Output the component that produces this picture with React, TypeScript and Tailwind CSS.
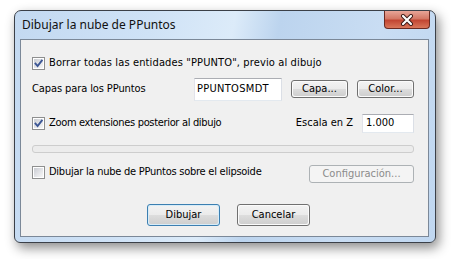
import React from "react";

const Check = ({ checked }: { checked: boolean }) => (
  <div className="w-[13px] h-[13px] shrink-0 border border-[#8e8f8f] bg-white p-[1px]">
    <div className="w-full h-full bg-[linear-gradient(135deg,#c9ccd2_0%,#e6e7ea_60%,#f7f7f7_100%)] relative">
      {checked && (
        <svg width="11" height="11" viewBox="0 0 11 11" className="absolute -left-[1px] -top-[1px]">
          <path d="M2.5 5.5 L4.6 8 L8.8 2.6" stroke="#3d5795" strokeWidth="1.9" fill="none" strokeLinecap="square" />
        </svg>
      )}
    </div>
  </div>
);

const Btn = ({ children, w, def, disabled }: { children: React.ReactNode; w: string; def?: boolean; disabled?: boolean }) => (
  <div
    className={
      disabled
        ? `${w} h-full rounded-[3px] border border-[#adb2b5] bg-[#f4f4f4] flex items-center justify-center text-[#8b8b8b]`
        : def
        ? `${w} h-full rounded-[3px] border border-[#3c7fb1] p-[1px] bg-[#d7ecf8]`
        : `${w} h-full rounded-[3px] border border-[#707070] p-[1px] bg-[#fbfbfb]`
    }
  >
    {disabled ? (
      children
    ) : (
      <div className="w-full h-full rounded-[2px] bg-[linear-gradient(180deg,#f2f2f2_0%,#ebebeb_50%,#dddddd_51%,#cfcfcf_100%)] flex items-center justify-center text-black">
        {children}
      </div>
    )}
  </div>
);

export default function App() {
  return (
    <div className="w-[451px] h-[259px] bg-white pl-[14px] pt-[10px] font-['DejaVu_Sans_Condensed','DejaVu_Sans',sans-serif] text-[11px] text-black">
      <div className="w-[422px] h-[233px] rounded-t-[7px] rounded-b-[6px] border border-[#3b4048] shadow-[3px_5px_12px_rgba(0,0,0,0.45)] bg-[linear-gradient(100deg,#c3d9f1_0%,#cfe2f6_30%,#dcebf9_48%,#bcd4ee_58%,#c9ddf3_80%,#c0d7f0_100%)] flex flex-col overflow-hidden">
        <div className="h-[28px] shrink-0 flex items-start justify-between">
          <div className="pl-[7px] pt-[6px] font-['Noto_Sans',sans-serif] text-[12px] leading-[16px] text-[#111]">
            Dibujar la nube de PPuntos
          </div>
          <div className="mr-[5px] w-[46px] h-[18px] rounded-b-[4px] border border-t-0 border-[#6b2a22] bg-[linear-gradient(180deg,#e8a598_0%,#d47866_45%,#c24633_55%,#d9765a_100%)] flex items-center justify-center">
            <svg width="14" height="12" viewBox="0 0 14 12">
              <path d="M3 2 L11 10 M11 2 L3 10" stroke="#3a1a16" strokeWidth="4" strokeLinecap="round" />
              <path d="M3 2 L11 10 M11 2 L3 10" stroke="#ffffff" strokeWidth="2.2" strokeLinecap="round" />
            </svg>
          </div>
        </div>
        <div className="ml-[5px] w-[409px] h-[198px] border border-[#7b8898] bg-[#f0f0f0] pl-[11px] pr-[14px] flex flex-col">
          <div className="mt-[17px] h-[13px] flex items-center gap-[4px]">
            <Check checked />
            <span className="tracking-[0.13px]">Borrar todas las entidades "PPUNTO", previo al dibujo</span>
          </div>
          <div className="mt-[7px] h-[24px] flex items-center justify-between">
            <span className="tracking-[-0.1px]">Capas para los PPuntos</span>
            <div className="flex items-center gap-[9px] h-full">
              <div className="w-[88px] h-[23px] border border-[#abadb3] border-l-[#e2e3ea] border-r-[#dbdfe6] border-b-[#e3e9ef] bg-white flex items-center pl-[2px] tracking-[0.3px]">
                PPUNTOSMDT
              </div>
              <div className="h-[18px]">
                <Btn w="w-[57px]">Capa...</Btn>
              </div>
              <div className="h-[18px]">
                <Btn w="w-[57px]">Color...</Btn>
              </div>
            </div>
          </div>
          <div className="mt-[12px] h-[20px] flex items-center justify-between">
            <div className="flex items-center gap-[4px]">
              <Check checked />
              <span className="tracking-[-0.33px]">Zoom extensiones posterior al dibujo</span>
            </div>
            <div className="flex items-center gap-[9px]">
              <span>Escala en Z</span>
              <div className="w-[52px] h-[19px] border border-[#abadb3] border-l-[#e2e3ea] border-r-[#dbdfe6] border-b-[#e3e9ef] bg-white flex items-center pl-[3px]">
                1.000
              </div>
            </div>
          </div>
          <div className="mt-[12px] h-[8px] rounded-[3px] border border-[#cdcdcd] bg-[#ececec]" />
          <div className="mt-[9px] h-[21px] flex items-center justify-between">
            <div className="flex items-center gap-[4px]">
              <Check checked={false} />
              <span className="tracking-[-0.25px]">Dibujar la nube de PPuntos sobre el elipsoide</span>
            </div>
            <div className="h-[18px] self-end">
              <Btn w="w-[105px]" disabled>
                Configuración...
              </Btn>
            </div>
          </div>
          <div className="mt-[21px] h-[22px] flex pl-[115px] gap-[17px]">
            <Btn w="w-[73px]" def>
              Dibujar
            </Btn>
            <Btn w="w-[73px]">Cancelar</Btn>
          </div>
        </div>
      </div>
    </div>
  );
}
